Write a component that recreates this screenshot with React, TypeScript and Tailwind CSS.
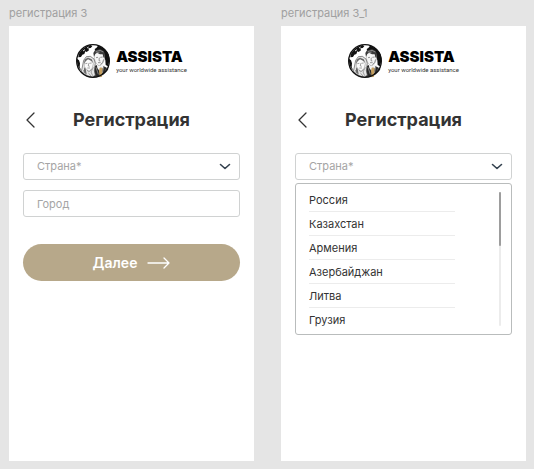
import type { ReactNode } from 'react';

const countries = ['Россия', 'Казахстан', 'Армения', 'Азербайджан', 'Литва', 'Грузия'];

function Emblem() {
  return (
    <svg width="34" height="34" viewBox="0 0 102 102" aria-hidden="true">
      <circle cx="51" cy="51" r="49" fill="#fff" />
      {/* Continents */}
      <path d="M8 32C15 17 28 6 44 3l5 4-5 5-7 1 2 6-7 5-4-2-3 8-6 2-4 7-8 1z" fill="#111" />
      <path d="M66 5c17 4 28 15 33 29l1 18-4 15-7-4-1-14-3-9-6-9-6-6-8-5-7 1-2-6 5-3z" fill="#111" />
      <path d="M3 44l6 5 3 9-1 12 5 9C8 73 2 61 3 44z" fill="#111" />
      <path d="M21 21l6-4M33 12l5-3" stroke="#ddd" strokeWidth="3" fill="none" />
      {/* Man */}
      <path d="M48 72l12-8 14-2 18 9 5 5C88 92 71 100 52 99z" fill="#292929" />
      <path d="M62 60l2 12 10 14 8-18-3-12z" fill="#f4f4f4" />
      <path d="M55 31l3-9 20-1 8 11-1 15-4 10-8 8-7-1-8-10-3-12z" fill="#f6f6f6" stroke="#666" strokeWidth="1" />
      <path d="M54 38l-2-11 5-8 8-2 7-2 11 6 4 10-2 11-3-2-2-9-8 0-9-5-5 4z" fill="#3a3a3a" />
      <path d="M59 23l13-4 10 5M61 27l10-3" stroke="#aaa" strokeWidth="2" fill="none" />
      <path d="M60 41l6-1m7 0l7-1M70 41l-1 9 4 1m-7 5h8M83 46l-3 9-7 7" stroke="#666" strokeWidth="2" fill="none" />
      <path d="M71 71l5-1 4 5-2 23-7 2-2-20z" fill="#c6a05f" />
      <path d="M60 70l7 21M84 65l-5 22M92 73l-7 17" stroke="#aaa" strokeWidth="2" fill="none" />
      {/* Woman */}
      <path d="M18 74l5-25 8-11 12-1 11 8 4 13-3 22 3 14-9 5-18-4-15-13z" fill="#e6e6e6" stroke="#555" strokeWidth="2" />
      <path d="M25 58l4-12 9-4 10 6 4 11-4 15-8 7-8-4-7-10z" fill="#fafafa" stroke="#666" strokeWidth="1" />
      <path d="M24 60l2-13 9-6 12 5 4 11-6-7-9-4-7 6zM25 70l-2 15 9 6-3-17z" fill="#666" />
      <path d="M28 59l6-1m6 0l7-1m-9 1l-1 8 4 1m-7 5h8M33 78l5 6 9-8M22 78l9 14M52 70l-7 14 5 11M38 88l7 8" stroke="#777" strokeWidth="2" fill="none" />
      <circle cx="51" cy="51" r="49" fill="none" stroke="#111" strokeWidth="4" />
    </svg>
  );
}

function Logo() {
  return (
    <div className="flex items-center justify-center gap-1.5">
      <Emblem />
      <div className="flex flex-col">
        <span className="text-[15px] leading-[18px] font-black text-black">ASSISTA</span>
        <span className="font-['Roboto',sans-serif] text-[6px] leading-2 whitespace-nowrap text-[#333]">
          your worldwide assistance
        </span>
      </div>
    </div>
  );
}

function CountrySelect({ id }: { id: string }) {
  return (
    <div className="relative">
      <select
        id={id}
        aria-label="Страна"
        defaultValue=""
        className="block h-[27px] w-full appearance-none rounded-[3px] border border-[#d0d2d2] bg-white px-[13px] text-[11px] text-[#a5a5a5]"
      >
        <option value="">Страна*</option>
        {countries.map((country) => (
          <option key={country}>{country}</option>
        ))}
      </select>
      <svg
        className="pointer-events-none absolute inset-y-0 right-[9px] my-auto"
        width="12"
        height="8"
        viewBox="0 0 12 8"
        fill="none"
        stroke="#34424f"
        strokeWidth="1.6"
        strokeLinecap="round"
        strokeLinejoin="round"
      >
        <path d="M1.500 1.500L6 5.500l4.500-4" />
      </svg>
    </div>
  );
}

function CountryList() {
  return (
    <div className="mt-[3px] flex justify-between rounded-[3px] border border-[#b9bcbc] pt-1 pr-2.5 pb-0.5 pl-[13px]">
      <ul className="w-[146px]">
        {countries.map((country) => (
          <li key={country} className="h-6 border-b border-[#ececec] text-[11px] leading-5 text-[#333] last:border-0">
            <button type="button" className="block w-full pt-0.5 text-left">{country}</button>
          </li>
        ))}
      </ul>
      <div className="mt-1 mb-1.5 w-0.5 rounded-full bg-[#ececec]">
        <div className="h-2/5 rounded-full bg-[#9d9d9d]" />
      </div>
    </div>
  );
}

function Screen({ title, children }: { title: string; children: ReactNode }) {
  return (
    <section className="flex flex-1 flex-col">
      <p className="pb-1.5 text-[11px] leading-[14px] text-[#a0a0a0]">{title}</p>
      <div className="flex-1 bg-white px-3.5 pt-[18px]">
        <Logo />
        <div className="relative mt-7 mb-[19px] flex items-center justify-center">
          <button type="button" aria-label="Назад" className="absolute left-[3px]">
            <svg width="9" height="16" viewBox="0 0 9 16" fill="none" stroke="#333" strokeWidth="1.3" strokeLinecap="round" strokeLinejoin="round">
              <path d="M8 1L1 8l7 7" />
            </svg>
          </button>
          <h1 className="text-lg leading-7 font-bold text-[#333]">Регистрация</h1>
        </div>
        {children}
      </div>
    </section>
  );
}

export default function App() {
  return (
    <main className="flex min-h-screen gap-[27px] bg-[#e5e5e5] pt-1.5 pr-2 pb-2 pl-[9px] font-['Inter',sans-serif]">
      <Screen title="регистрация 3">
        <form>
          <CountrySelect id="country" />
          <input
            type="text"
            aria-label="Город"
            placeholder="Город"
            className="mt-2.5 block h-[27px] w-full rounded-[3px] border border-[#d0d2d2] px-[13px] text-[11px] placeholder:text-[#a5a5a5]"
          />
          <button
            type="button"
            className="mt-[27px] flex h-[37px] w-full items-center justify-center gap-2.5 rounded-full bg-[#b7a88a] text-sm font-semibold text-white"
          >
            Далее
            <svg width="23" height="12" viewBox="0 0 23 12" fill="none" stroke="currentColor" strokeWidth="1.3" strokeLinecap="round" strokeLinejoin="round">
              <path d="M1 6h21M17 1l5 5-5 5" />
            </svg>
          </button>
        </form>
      </Screen>
      <Screen title="регистрация 3_1">
        <CountrySelect id="country-open" />
        <CountryList />
      </Screen>
    </main>
  );
}
